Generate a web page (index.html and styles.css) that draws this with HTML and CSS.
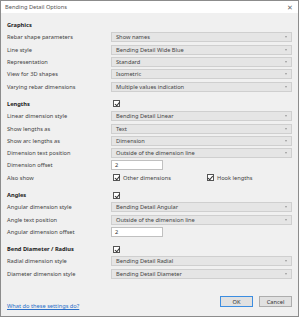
FILE: index.html
```html
<!DOCTYPE html>
<html lang="en">
<head>
  <meta charset="UTF-8">
  <title>Bending Detail Options</title>
  <link rel="stylesheet" href="styles.css">
</head>
<body>
  <div class="dialog">
    <div class="titlebar">
      <span class="title">Bending Detail Options</span>
      <span class="close">&#x2715;</span>
    </div>

    <div class="content">
      <div class="section">
        <div class="row heading"><span>Graphics</span></div>
        <div class="row"><label>Rebar shape parameters</label><div class="select">Show names</div></div>
        <div class="row"><label>Line style</label><div class="select">Bending Detail Wide Blue</div></div>
        <div class="row"><label>Representation</label><div class="select">Standard</div></div>
        <div class="row"><label>View for 3D shapes</label><div class="select">Isometric</div></div>
        <div class="row"><label>Varying rebar dimensions</label><div class="select">Multiple values indication</div></div>
      </div>

      <div class="section">
        <div class="row heading"><span>Lengths</span><span class="check on"></span></div>
        <div class="row"><label>Linear dimension style</label><div class="select">Bending Detail Linear</div></div>
        <div class="row"><label>Show lengths as</label><div class="select">Text</div></div>
        <div class="row"><label>Show arc lengths as</label><div class="select">Dimension</div></div>
        <div class="row"><label>Dimension text position</label><div class="select">Outside of the dimension line</div></div>
        <div class="row"><label>Dimension offset</label><div class="input">2</div></div>
        <div class="row"><label>Also show</label>
          <div class="checks">
            <span class="opt"><span class="check on"></span>Other dimensions</span>
            <span class="opt"><span class="check on"></span>Hook lengths</span>
          </div>
        </div>
      </div>

      <div class="section">
        <div class="row heading"><span>Angles</span><span class="check on"></span></div>
        <div class="row"><label>Angular dimension style</label><div class="select">Bending Detail Angular</div></div>
        <div class="row"><label>Angle text position</label><div class="select">Outside of the dimension line</div></div>
        <div class="row"><label>Angular dimension offset</label><div class="input">2</div></div>
      </div>

      <div class="section">
        <div class="row heading"><span>Bend Diameter / Radius</span><span class="check on"></span></div>
        <div class="row"><label>Radial dimension style</label><div class="select">Bending Detail Radial</div></div>
        <div class="row"><label>Diameter dimension style</label><div class="select">Bending Detail Diameter</div></div>
      </div>
    </div>

    <div class="footer">
      <a href="#" class="help">What do these settings do?</a>
      <div class="buttons">
        <button class="btn default">OK</button>
        <button class="btn">Cancel</button>
      </div>
    </div>
  </div>
</body>
</html>
```

FILE: styles.css
```css
body {
  margin: 0;
  font-family: "Noto Sans", "Open Sans", sans-serif;
  font-size: 5.7px;
  color: #3a3a3a;
}

.dialog {
  width: 299px;
  height: 317px;
  box-sizing: border-box;
  border: 1px solid #8c8c8c;
  background: #f0f0f0;
  display: flex;
  flex-direction: column;
}

.titlebar {
  height: 12px;
  background: #fff;
  display: flex;
  align-items: center;
  justify-content: space-between;
  padding: 0 5px 0 4px;
}

.title {
  color: #555;
}

.close {
  font-size: 6.5px;
  color: #666;
}

.content {
  padding: 6px 6px 0 6px;
}

.section + .section {
  margin-top: 5px;
}

.row {
  display: grid;
  grid-template-columns: 104px 1fr;
  align-items: center;
  height: 12.3px;
}

.row label {
  color: #444;
}

.heading {
  font-weight: bold;
  color: #222;
}

.select {
  height: 10px;
  box-sizing: border-box;
  border: 1px solid #cfcfcf;
  background: #e5e5e5;
  padding: 0 4px;
  line-height: 8px;
  color: #444;
  position: relative;
}

.select::after {
  content: "";
  position: absolute;
  right: 4px;
  top: 3px;
  border-left: 1.5px solid transparent;
  border-right: 1.5px solid transparent;
  border-top: 2px solid #999;
}

.input {
  width: 52px;
  height: 10px;
  box-sizing: border-box;
  border: 1px solid #c0c0c0;
  background: #fff;
  padding: 0 3px;
  line-height: 8px;
  color: #333;
}

.check {
  width: 7px;
  height: 7px;
  box-sizing: border-box;
  border: 1px solid #555;
  background: #fff;
  margin-left: 2px;
  position: relative;
  display: inline-block;
}

.check.on::after {
  content: "";
  position: absolute;
  left: 1.5px;
  top: 0;
  width: 2px;
  height: 3.5px;
  border-right: 1px solid #333;
  border-bottom: 1px solid #333;
  transform: rotate(40deg);
}

.checks {
  display: flex;
  align-items: center;
}

.opt {
  display: flex;
  align-items: center;
  gap: 3px;
  color: #444;
}

.opt + .opt {
  margin-left: 34px;
}

.footer {
  margin-top: auto;
  display: flex;
  justify-content: space-between;
  align-items: flex-end;
  padding: 0 6px 7px 6px;
}

.help {
  color: #2a6fc9;
  text-decoration: underline;
  margin-bottom: -1px;
}

.buttons {
  display: flex;
  gap: 6px;
  margin-bottom: 2px;
}

.btn {
  width: 33px;
  height: 11px;
  padding: 0;
  font-family: inherit;
  font-size: 5.7px;
  color: #333;
  background: #e1e1e1;
  border: 1px solid #adadad;
}

.btn.default {
  border-color: #3c8de0;
}
```
